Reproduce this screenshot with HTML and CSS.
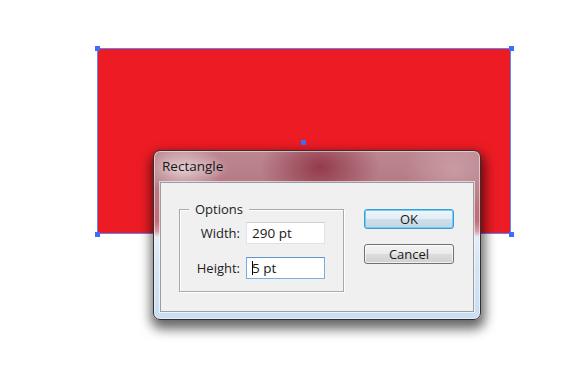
FILE: index.html
```html
<!DOCTYPE html>
<html>
<head>
<meta charset="utf-8">
<link rel="stylesheet" href="styles.css">
</head>
<body>
<div class="canvas">
  <div class="shape"></div>
  <span class="handle h-tl"></span>
  <span class="handle h-tr"></span>
  <span class="handle h-bl"></span>
  <span class="handle h-br"></span>
  <span class="handle h-c"></span>

  <div class="dialog">
    <div class="titlebar">Rectangle</div>
    <div class="panel">
      <div class="group">
        <span class="legend">Options</span>
        <div class="row">
          <span class="label">Width:</span>
          <div class="field">290 pt</div>
        </div>
        <div class="row">
          <span class="label">Height:</span>
          <div class="field focused"><span class="caret"></span>5 pt</div>
        </div>
      </div>
      <div class="buttons">
        <div class="btn default">OK</div>
        <div class="btn">Cancel</div>
      </div>
    </div>
  </div>
</div>
</body>
</html>
```

FILE: styles.css
```css
html, body {
  margin: 0;
  padding: 0;
  background: #ffffff;
}
.canvas {
  position: relative;
  width: 580px;
  height: 377px;
  overflow: hidden;
  background: #ffffff;
  font-family: "Open Sans", "Noto Sans", sans-serif;
  font-size: 12.5px;
  color: #1c1c1c;
}
.shape {
  position: absolute;
  left: 97px;
  top: 48px;
  width: 414px;
  height: 186px;
  box-sizing: border-box;
  background: #ed1c24;
  border: 1px solid #5a86ff;
}
.handle {
  position: absolute;
  width: 5px;
  height: 5px;
  background: #3d6cff;
}
.h-tl { left: 95px; top: 46px; }
.h-tr { left: 509px; top: 46px; }
.h-bl { left: 95px; top: 232px; }
.h-br { left: 509px; top: 232px; }
.h-c { left: 301px; top: 140px; }

.dialog {
  position: absolute;
  left: 153px;
  top: 150px;
  width: 328px;
  height: 170px;
  box-sizing: border-box;
  border: 1px solid #3a2c30;
  border-radius: 7px;
  padding: 0 6px 7px 6px;
  display: flex;
  flex-direction: column;
  background:
    radial-gradient(ellipse 40px 26px at 9% 18px, rgba(255,255,255,0.55), rgba(255,255,255,0) 100%),
    radial-gradient(ellipse 60px 42px at 51% 16px, rgba(135,35,55,0.75), rgba(135,35,55,0) 100%),
    radial-gradient(ellipse 50px 40px at 92% 20px, rgba(255,255,255,0.22), rgba(255,255,255,0) 100%),
    linear-gradient(180deg,
      #bd8790 0px,
      #b67c86 30px,
      #bb7680 45px,
      #c06d77 70px,
      #d59aa1 80px,
      #e4eef8 86px,
      #d6e7f6 110px,
      #c8def3 100%);
  box-shadow:
    inset 0 0 0 1px rgba(255,255,255,0.5),
    1px 6px 12px 3px rgba(0,0,0,0.6);
}
.titlebar {
  height: 31px;
  line-height: 31px;
  padding-left: 2px;
  font-size: 13.5px;
  color: #161616;
  text-shadow: 0 0 8px rgba(255,255,255,0.8);
}
.panel {
  flex: 1;
  box-sizing: border-box;
  background: #f0f0f0;
  border: 1px solid #979ea6;
  box-shadow: 0 0 0 1px rgba(255,255,255,0.6);
  padding: 26px 0 0 18px;
  display: flex;
  align-items: flex-start;
}
.group {
  position: relative;
  box-sizing: border-box;
  width: 165px;
  height: 83px;
  border: 1px solid #a9a9a9;
  box-shadow: inset 1px 1px 0 #ffffff, 1px 1px 0 #ffffff;
  padding: 12px 18px 0 0;
  display: flex;
  flex-direction: column;
  gap: 13px;
}
.legend {
  position: absolute;
  top: -10px;
  left: 9px;
  padding: 0 6px;
  background: #f0f0f0;
  line-height: 18px;
  font-size: 13px;
}
.row {
  display: flex;
  justify-content: flex-end;
  align-items: center;
  gap: 6px;
}
.label {
  font-size: 13px;
}
.field {
  width: 79px;
  height: 22px;
  box-sizing: border-box;
  background: #ffffff;
  border: 1px solid #dde3ea;
  border-top-color: #c9cfd6;
  padding-left: 5px;
  line-height: 20px;
  font-size: 13.5px;
  color: #1a1a1a;
  display: flex;
  align-items: center;
}
.field.focused {
  border-color: #7aaee0;
  border-top-color: #5f95cf;
}
.caret {
  width: 1px;
  height: 14px;
  background: #000;
  margin-right: -1px;
}
.buttons {
  margin-left: 20px;
  display: flex;
  flex-direction: column;
  gap: 15px;
}
.btn {
  width: 90px;
  height: 20px;
  box-sizing: border-box;
  border: 1px solid #707070;
  border-radius: 3px;
  text-align: center;
  line-height: 18px;
  font-size: 13px;
  color: #1a1a1a;
  background: linear-gradient(180deg, #f3f3f3 0%, #ebebeb 48%, #dcdcdc 52%, #d0d0d0 100%);
  box-shadow: inset 0 0 0 1px rgba(255,255,255,0.7);
}
.btn.default {
  border-color: #3c9ad6;
  background: linear-gradient(180deg, #f0f6fa 0%, #e3edf3 48%, #cfdfe9 52%, #c3d6e2 100%);
  box-shadow: inset 0 0 0 1px #6fd0f5;
}
```
